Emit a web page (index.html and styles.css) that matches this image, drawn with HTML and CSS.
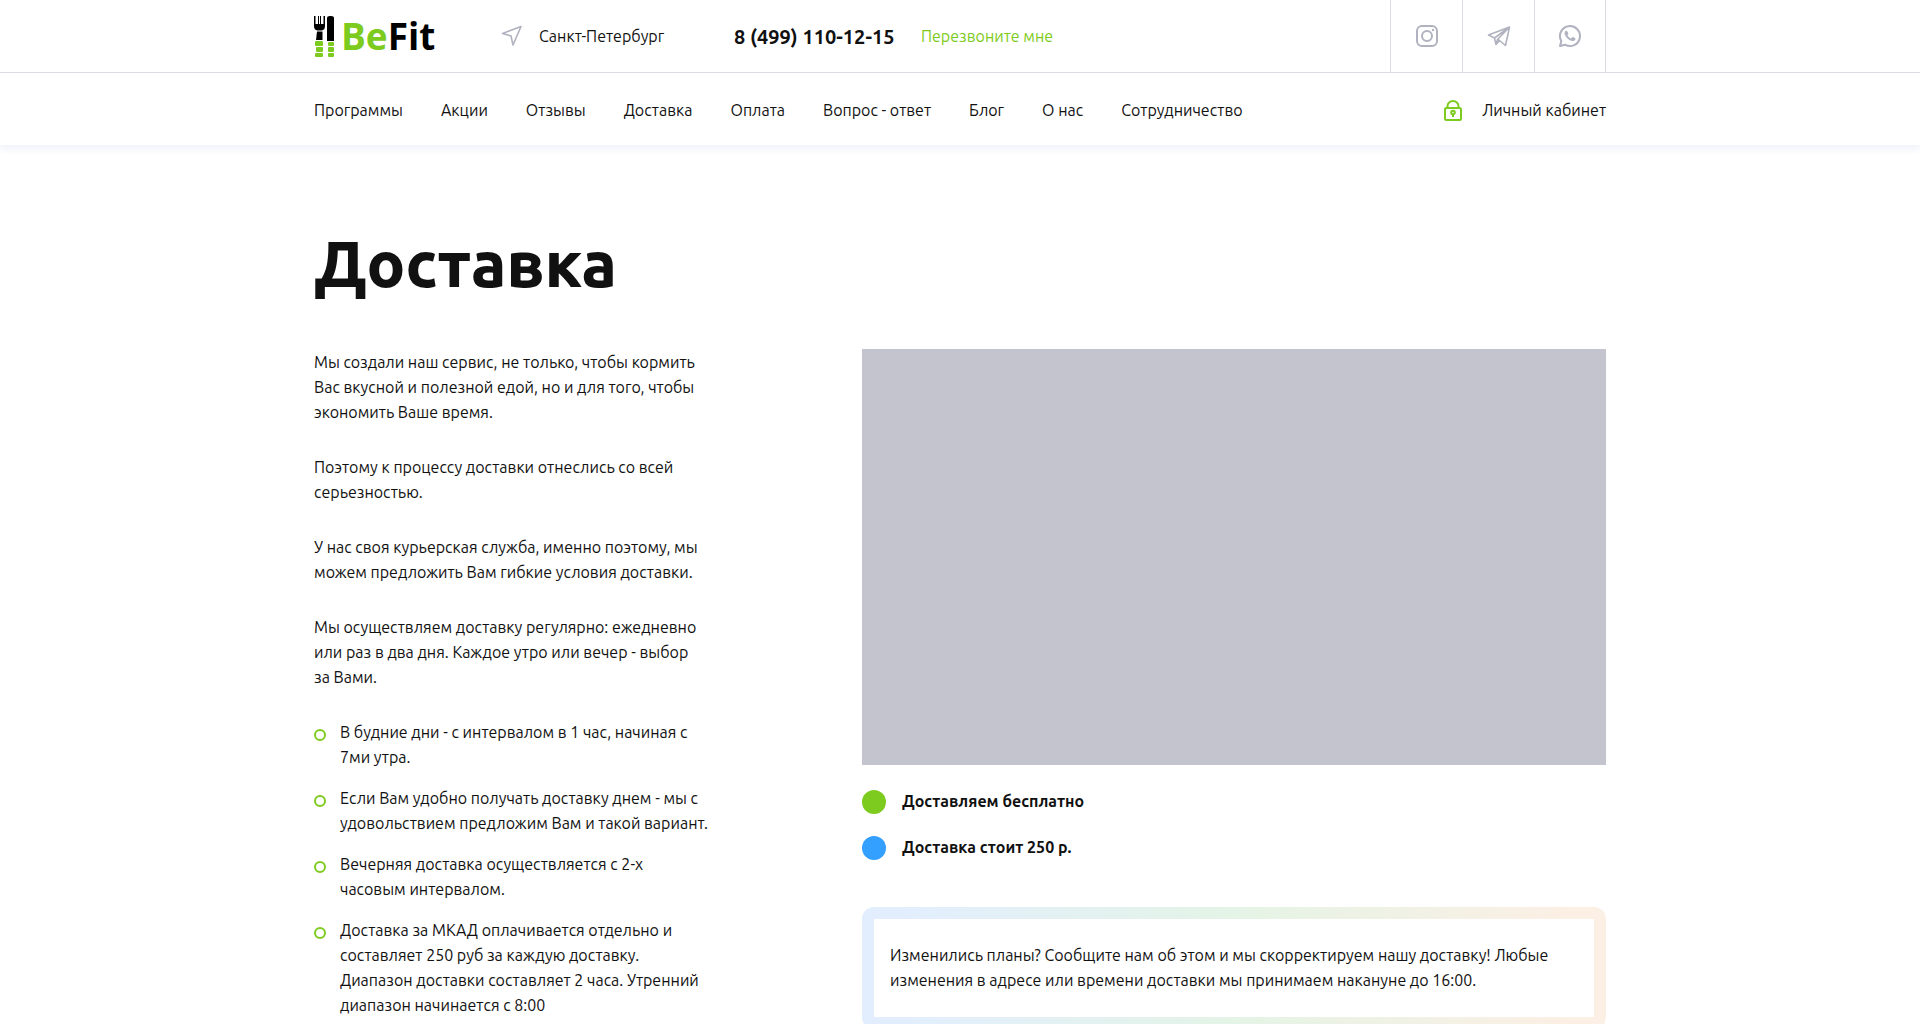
FILE: index.html
```html
<!DOCTYPE html>
<html lang="ru">
<head>
<meta charset="utf-8">
<meta name="viewport" content="width=device-width, initial-scale=1">
<title>Доставка — BeFit</title>
<link rel="stylesheet" href="styles.css">
</head>
<body>
<header class="header">
  <div class="header-top">
    <div class="container top-row">
      <a class="logo" href="#">
        <svg class="logo-mark" width="21" height="41" viewBox="0 0 21 41" aria-hidden="true">
          <path d="M0 0h1.500v8h2.500V0h1v8h1V0h1v8h2.500V0H11v10q0 4-3.500 4.500h-4Q0 14 0 10z"/>
          <path d="M3 15.500h5.500V24H2z"/>
          <path d="M13 2q0-2 3-2h1q3 0 3 2v23h-7z"/>
          <g fill="#7ecb20"><rect x="1" y="25" width="8" height="5" rx="1"/><rect x="2" y="31" width="7" height="5" rx="1"/><rect x="1" y="37" width="8" height="4" rx="1"/><rect x="14" y="26" width="6" height="4" rx="1"/><rect x="14" y="31" width="6" height="5" rx="1"/><rect x="14" y="37" width="6" height="4" rx="1"/></g>
        </svg>
        <span class="logo-text"><span class="logo-be">Be</span>Fit</span>
      </a>
      <a class="city" href="#">
        <svg width="22" height="22" viewBox="0 0 22 22" fill="none" stroke="#b1b2bf" stroke-width="1.600" stroke-linejoin="round" aria-hidden="true"><path d="M20 1.500 1.500 8.500l8.500 2.500 2 9z"/></svg>
        Санкт-Петербург
      </a>
      <a class="phone" href="tel:+84991101215">8 (499) 110-12-15</a>
      <button class="callback" type="button">Перезвоните мне</button>
      <div class="socials">
        <a class="social" href="#" aria-label="Instagram">
          <svg width="24" height="24" viewBox="0 0 24 24" fill="none" stroke="#b1b2bf" stroke-width="2"><rect x="2" y="2" width="20" height="20" rx="5"/><circle cx="12" cy="12" r="5"/><circle cx="18" cy="6" r="1.200" fill="#b1b2bf" stroke="none"/></svg>
        </a>
        <a class="social" href="#" aria-label="Telegram">
          <svg width="24" height="24" viewBox="0 0 24 24" fill="none" stroke="#b1b2bf" stroke-width="1.600" stroke-linejoin="round"><path d="M22.500 3 1.500 11l6 3 1.500 6.500 3.500-4 6 5zM22.500 3l-15 11M22.500 3 10.500 15.500 9 20.500M10.500 15.500l2 1"/></svg>
        </a>
        <a class="social" href="#" aria-label="WhatsApp">
          <svg width="24" height="24" viewBox="0 0 24 24" fill="none" stroke="#b1b2bf" stroke-width="2" stroke-linejoin="round"><path d="M2 22l1.300-5A10 10 0 1 1 7 20.700z"/><path fill="#b1b2bf" stroke="none" d="M8.500 6.800c-.6-.3-1.100 0-1.500.6-2 3.600 4.200 10.200 8.500 9.500 1.400-.3 2.200-1.300 1.900-2.300-.2-.5-2.500-1.700-3-1.500-.5.200-.9 1.400-1.400 1.300-1.300-.2-3.400-2.500-3.500-3.500 0-.6 1-1 .9-1.500-.2-.8-1.200-2.400-1.900-2.600z"/></svg>
        </a>
      </div>
    </div>
  </div>
  <div class="container nav-row">
    <nav class="nav">
      <a href="#">Программы</a>
      <a href="#">Акции</a>
      <a href="#">Отзывы</a>
      <a href="#">Доставка</a>
      <a href="#">Оплата</a>
      <a href="#">Вопрос - ответ</a>
      <a href="#">Блог</a>
      <a href="#">О нас</a>
      <a href="#">Сотрудничество</a>
    </nav>
    <a class="account" href="#">
      <svg width="18" height="21" viewBox="0 0 18 21" fill="none" stroke="#7ecb20" stroke-width="2" aria-hidden="true"><rect x="1" y="8" width="16" height="12" rx="1.500"/><path d="M3.500 8V6a5.500 5 0 0 1 11 0v2"/><circle cx="9" cy="12.500" r="1.800"/><path d="M9 14v3"/></svg>
      Личный кабинет
    </a>
  </div>
</header>
<main class="container">
  <h1 class="title">Доставка</h1>
  <div class="columns">
    <div class="info">
      <p>Мы создали наш сервис, не только, чтобы кормить Вас вкусной и полезной едой, но и для того, чтобы экономить Ваше время.</p>
      <p>Поэтому к процессу доставки отнеслись со всей серьезностью.</p>
      <p>У нас своя курьерская служба, именно поэтому, мы можем предложить Вам гибкие условия доставки.</p>
      <p>Мы осуществляем доставку регулярно: ежедневно или раз в два дня. Каждое утро или вечер - выбор за&nbsp;Вами.</p>
      <ul class="points">
        <li>В будние дни - с интервалом в 1 час, начиная с 7ми утра.</li>
        <li>Если Вам удобно получать доставку днем - мы с удовольствием предложим Вам и такой вариант.</li>
        <li>Вечерняя доставка осуществляется с 2-х часовым интервалом.</li>
        <li><span>Доставка за МКАД оплачивается отдельно и составляет 250 руб за каждую доставку.<br>Диапазон доставки составляет 2 часа. Утренний диапазон начинается с 8:00</span></li>
      </ul>
    </div>
    <div class="zone">
      <div class="map" role="img" aria-label="Карта доставки"></div>
      <ul class="legend">
        <li class="free">Доставляем бесплатно</li>
        <li class="paid">Доставка стоит 250 р.</li>
      </ul>
      <div class="notice"><p>Изменились планы? Сообщите нам об этом и мы скорректируем нашу доставку! Любые изменения в адресе или времени доставки мы принимаем накануне до 16:00.</p></div>
    </div>
  </div>
</main>
</body>
</html>
```
FILE: styles.css
```css
*,
*::before {
  box-sizing: border-box;
}

body {
  margin: 0;
  background: #fff;
  color: #111;
  font: 16px/25px "Ubuntu", "Noto Sans", sans-serif;
}

a {
  color: inherit;
  text-decoration: none;
}

p,
ul {
  margin: 0;
  padding: 0;
}

ul {
  list-style: none;
}

.container {
  max-width: 1332px;
  margin: 0 auto;
  padding: 0 20px;
}

.header {
  box-shadow: 0 4px 8px #f0f1fa;
}

.header-top {
  border-bottom: 1px solid #dadbe6;
}

.top-row {
  display: flex;
  align-items: center;
  height: 72px;
}

.nav-row {
  display: flex;
  align-items: center;
  justify-content: space-between;
  height: 72px;
  padding-top: 2px;
}

.logo {
  display: flex;
  align-items: center;
  gap: 6px;
  width: 187px;
}

.logo-text {
  color: #000;
  font: bold 37px/40px "Open Sans", sans-serif;
}

.logo-be {
  color: #7ecb20;
}

.city {
  display: flex;
  align-items: center;
  gap: 16px;
  width: 233px;
}

.phone {
  width: 187px;
  font-size: 20px;
  font-weight: bold;
}

.callback {
  padding: 0;
  border: 0;
  background: none;
  color: #7ecb20;
  font: inherit;
  cursor: pointer;
}

.socials {
  display: flex;
  height: 100%;
  margin-left: auto;
}

.social {
  display: flex;
  align-items: center;
  justify-content: center;
  width: 72px;
  border-left: 1px solid #dadbe6;
}

.social:last-child {
  border-right: 1px solid #dadbe6;
}

.nav {
  display: flex;
  gap: 38px;
}

.account {
  display: flex;
  align-items: center;
  gap: 20px;
}

.title {
  margin: 78px 0 46px;
  font-size: 64px;
  font-weight: 800;
  line-height: 80px;
}

.columns {
  display: grid;
  grid-template-columns: 396px minmax(0, 744px);
  justify-content: space-between;
}

.info {
  display: flex;
  flex-direction: column;
  gap: 30px;
  padding-top: 1px;
}

.points {
  display: flex;
  flex-direction: column;
  gap: 16px;
}

.points li {
  display: grid;
  grid-template-columns: 12px 1fr;
  gap: 14px;
}

.points li::before {
  content: "";
  width: 12px;
  height: 12px;
  margin-top: 9px;
  border: 2px solid #7ecb20;
  border-radius: 50%;
}

.map {
  height: 416px;
  background: #c4c4ce;
}

.legend {
  display: flex;
  flex-direction: column;
  gap: 21px;
  margin: 24px 0 47px;
  font-weight: bold;
}

.legend li {
  display: flex;
  align-items: center;
  gap: 16px;
}

.legend li::before {
  content: "";
  width: 24px;
  height: 24px;
  border-radius: 50%;
}

.legend .free::before {
  background: #7ecb20;
}

.legend .paid::before {
  background: #339fff;
}

.notice {
  padding: 12px;
  border-radius: 12px;
  background: linear-gradient(90deg, #e2eefe 5%, #e4f4e6 50%, #fcefe4 95%);
}

.notice p {
  padding: 24px 16px;
  background: #fff;
}
```
